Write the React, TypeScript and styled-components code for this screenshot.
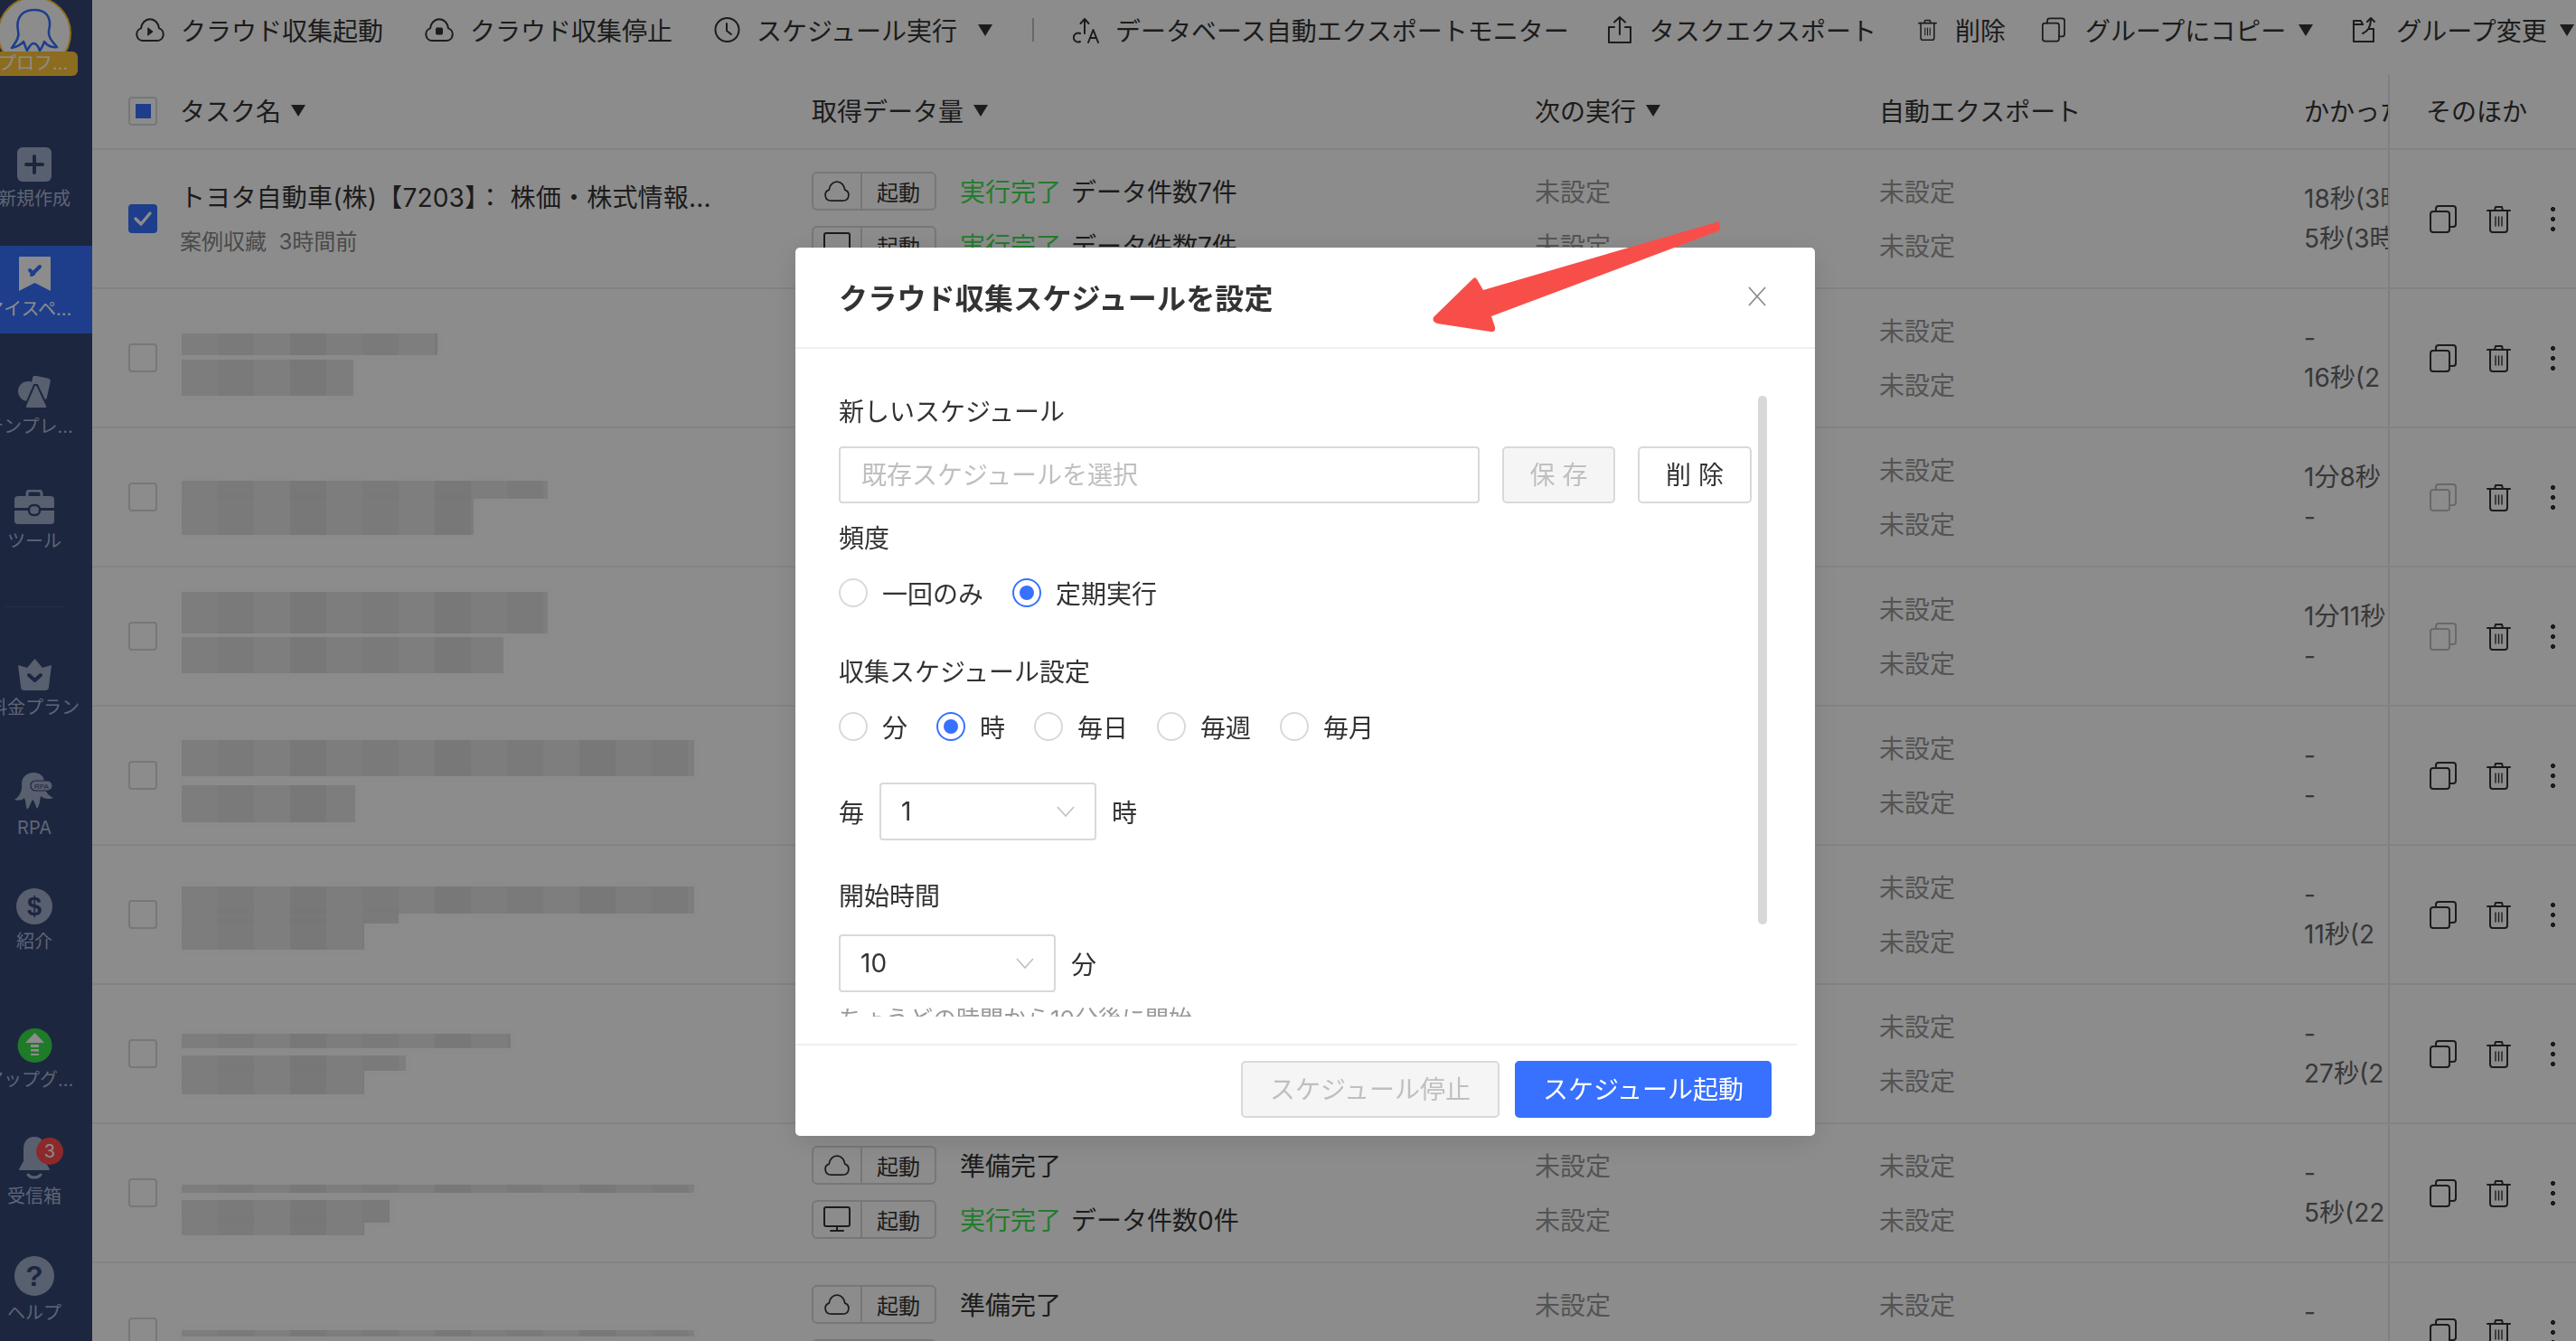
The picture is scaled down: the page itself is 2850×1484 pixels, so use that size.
import React from 'react';
import styled, { createGlobalStyle } from 'styled-components';

const GlobalStyle = createGlobalStyle`
	html, body {
		margin: 0;
		padding: 0;
		overflow: hidden;
		background: #fff;
	}
	* {
		box-sizing: border-box;
	}
	body {
		font-family: Inter, "Noto Sans CJK JP", "Noto Sans", sans-serif;
		color: #333;
	}
`;

const Page = styled.div`
	display: flex;
	width: 2850px;
	height: 1484px;
	overflow: hidden;
	background: #fff;
`;

/* sidebar: the screenshot is cut on the left, so it starts off screen */
const Sidebar = styled.nav`
	flex: none;
	width: 128px;
	margin-left: -26px;
	height: 100%;
	background: #354574;
	color: #a0afcc;
`;

const AvatarBlock = styled.div`
	position: relative;
	height: 84px;
	display: flex;
	justify-content: center;
	align-items: flex-start;
`;

const AvatarPicture = styled.svg`
	display: block;
	margin-top: -4px;
	width: 82px;
	height: 82px;
`;

const LevelBadge = styled.div`
	position: absolute;
	left: 16px;
	bottom: 0;
	width: 96px;
	height: 27px;
	padding: 0 8px;
	border-radius: 6px;
	background: #ffc53a;
	color: #fff;
	font-size: 20px;
	line-height: 27px;
	white-space: nowrap;
	overflow: hidden;
	text-overflow: ellipsis;
`;

const NavItem = styled.div<{ $mt: number; $active?: boolean }>`
	position: relative;
	height: 97px;
	margin-top: ${(p) => p.$mt}px;
	padding-top: 8px;
	background: ${(p) => (p.$active ? '#3871ff' : 'transparent')};
	color: ${(p) => (p.$active ? '#fff' : '#a0afcc')};
	display: flex;
	flex-direction: column;
	align-items: center;
`;

const NavIcon = styled.div`
	height: 43px;
	display: flex;
	align-items: flex-end;
	justify-content: center;
	svg {
		display: block;
	}
`;

const NavLabel = styled.div<{ $active?: boolean }>`
	width: 108px;
	margin-top: 5px;
	font-size: 20px;
	line-height: 28px;
	text-align: center;
	white-space: nowrap;
	overflow: hidden;
	text-overflow: ellipsis;
	color: ${(p) => (p.$active ? '#fff' : '#acb9d6')};
`;

const NavDivider = styled.div`
	width: 64px;
	height: 1px;
	margin: 45px 0 0 32px;
	background: #4a5a85;
`;

const Coin = styled.div<{ $size: number }>`
	width: ${(p) => p.$size}px;
	height: ${(p) => p.$size}px;
	border-radius: 50%;
	background: #a0afcc;
	color: #354574;
	font-size: ${(p) => p.$size * 0.72}px;
	font-weight: 700;
	line-height: ${(p) => p.$size}px;
	text-align: center;
	font-family: "Liberation Sans", sans-serif;
`;

const CountBadge = styled.div`
	position: absolute;
	left: 66px;
	top: 5px;
	width: 30px;
	height: 30px;
	border-radius: 50%;
	background: #ff4d4f;
	color: #fff;
	font-size: 20px;
	line-height: 30px;
	text-align: center;
`;

const Main = styled.main`
	flex: 1;
	min-width: 0;
	height: 100%;
	overflow: hidden;
`;

const Toolbar = styled.div`
	height: 82px;
	padding: 13px 0 0 48px;
	display: flex;
	align-items: flex-start;
	white-space: nowrap;
`;

const ToolItem = styled.div<{ $gap?: number; $ml?: number }>`
	height: 40px;
	margin-left: ${(p) => p.$ml ?? 46}px;
	display: flex;
	align-items: center;
	gap: ${(p) => p.$gap ?? 18}px;
	font-size: 28px;
	color: #333;
	svg {
		flex: none;
		display: block;
	}
`;

const ToolDivider = styled.div`
	width: 2px;
	height: 26px;
	margin: 7px 0 0 44px;
	background: #bdbdbd;
`;

const Caret = styled.i<{ $ml?: number }>`
	flex: none;
	display: inline-block;
	width: 0;
	height: 0;
	margin-left: ${(p) => p.$ml ?? 0}px;
	border-left: 8px solid transparent;
	border-right: 8px solid transparent;
	border-top: 13px solid #333;
`;

const columns = '97px 699px 800px 381px 470px 93px 208px';

const HeadRow = styled.div`
	height: 84px;
	display: grid;
	grid-template-columns: ${columns};
	border-bottom: 2px solid #eee;
`;

const HeadCell = styled.div<{ $fixed?: boolean }>`
	display: flex;
	align-items: center;
	gap: 11px;
	font-size: 28px;
	color: #333;
	white-space: nowrap;
	overflow: hidden;
	padding-bottom: 2px;
	padding-left: ${(p) => (p.$fixed ? '40px' : '0')};
	border-left: ${(p) => (p.$fixed ? '2px solid #e8e8e8' : 'none')};
`;

const CheckCell = styled.div`
	display: flex;
	align-items: center;
	padding-left: 40px;
`;

const CheckBox = styled.div<{ $state?: 'checked' | 'partial' }>`
	width: 32px;
	height: 32px;
	border-radius: 4px;
	border: 2px solid ${(p) => (p.$state === 'checked' ? '#3871ff' : '#d9d9d9')};
	background: ${(p) => (p.$state === 'checked' ? '#3871ff' : '#fff')};
	display: flex;
	align-items: center;
	justify-content: center;
	&::after {
		content: '';
		display: ${(p) => (p.$state === 'partial' ? 'block' : 'none')};
		width: 17px;
		height: 16px;
		background: #3871ff;
	}
`;

const Row = styled.div`
	height: 154px;
	display: grid;
	grid-template-columns: ${columns};
	border-bottom: 2px solid #eee;
`;

const NameCell = styled.div`
	padding-top: 33px;
	min-width: 0;
`;

const TaskName = styled.div`
	font-size: 28px;
	line-height: 40px;
	letter-spacing: 0.2px;
	color: #333;
	white-space: nowrap;
`;

const TaskMeta = styled.div`
	margin-top: 12px;
	font-size: 24px;
	line-height: 34px;
	color: #888;
`;

const BlurStack = styled.div<{ $top: number }>`
	padding: ${(p) => p.$top}px 0 0 2px;
	display: flex;
	flex-direction: column;
	align-items: flex-start;
`;

const BlurBar = styled.div<{ $w: number; $h: number; $gap: number }>`
	width: ${(p) => p.$w}px;
	height: ${(p) => p.$h}px;
	margin-top: ${(p) => p.$gap}px;
	background: repeating-linear-gradient(90deg, #e4e4e4 0 40px, #dedede 40px 80px, #e6e6e6 80px 120px, #dadada 120px 160px);
	box-shadow: 0 0 8px 4px rgba(0, 0, 0, 0.012);
`;

const LinesCell = styled.div`
	padding-top: 15px;
	min-width: 0;
`;

const Line = styled.div<{ $muted?: boolean }>`
	height: 60px;
	display: flex;
	align-items: center;
	font-size: 28px;
	white-space: nowrap;
	color: ${(p) => (p.$muted ? '#999' : '#333')};
`;

const RunTag = styled.div`
	flex: none;
	width: 138px;
	height: 43px;
	margin-right: 26px;
	border: 2px solid #d9d9d9;
	border-radius: 6px;
	display: flex;
	align-items: center;
	font-size: 24px;
	color: #333;
`;

const RunTagIcon = styled.div`
	width: 54px;
	height: 100%;
	border-right: 2px solid #d9d9d9;
	display: flex;
	align-items: center;
	justify-content: center;
`;

const RunTagText = styled.div`
	flex: 1;
	text-align: center;
`;

const DoneText = styled.span`
	color: #3ee250;
	margin-right: 11px;
`;

const TookCell = styled.div`
	overflow: hidden;
	display: flex;
	flex-direction: column;
	justify-content: center;
	font-size: 28px;
	line-height: 44px;
	color: #666;
	white-space: nowrap;
`;

const ActionCell = styled.div`
	border-left: 2px solid #e8e8e8;
	padding-left: 44px;
	display: flex;
	align-items: center;
	color: #333;
	svg {
		flex: none;
		display: block;
	}
`;

const CopyAction = styled.div<{ $faded?: boolean }>`
	opacity: ${(p) => (p.$faded ? 0.3 : 1)};
`;

const TrashAction = styled.div`
	margin-left: 33px;
`;

const MoreDots = styled.div`
	margin-left: 44px;
	width: 5px;
	height: 27px;
	background: radial-gradient(circle at 2.5px 2.5px, #333 2.3px, transparent 2.8px) 0 0 / 5px 11px repeat-y;
`;

const Mask = styled.div`
	position: fixed;
	inset: 0;
	background: rgba(0, 0, 0, 0.45);
`;

const Modal = styled.section`
	position: fixed;
	left: 880px;
	top: 274px;
	width: 1128px;
	height: 983px;
	border-radius: 5px;
	background: #fff;
	box-shadow: 0 6px 32px rgba(0, 0, 0, 0.12);
`;

const ModalHeader = styled.header`
	height: 112px;
	padding: 0 54px 2px 48px;
	border-bottom: 2px solid #f0f0f0;
	display: flex;
	align-items: center;
	justify-content: space-between;
`;

const ModalTitle = styled.h2`
	margin: 0;
	font-size: 32px;
	font-weight: 600;
	letter-spacing: 0.2px;
	color: #333;
`;

const ModalBody = styled.div`
	height: 739px;
	padding: 50px 0 0 48px;
	overflow: hidden;
`;

const ScrollThumb = styled.div`
	position: absolute;
	left: 1065px;
	top: 164px;
	width: 10px;
	height: 585px;
	border-radius: 5px;
	background: #d8d8d8;
`;

const FieldLabel = styled.div<{ $mt?: number }>`
	margin-top: ${(p) => p.$mt ?? 0}px;
	font-size: 28px;
	line-height: 40px;
	color: #333;
`;

const PresetRow = styled.div`
	margin-top: 18px;
	display: flex;
	gap: 25px;
`;

const PresetInput = styled.div`
	width: 709px;
	height: 63px;
	padding-left: 23px;
	border: 2px solid #d9d9d9;
	border-radius: 4px;
	font-size: 28px;
	line-height: 60px;
	color: #bfbfbf;
`;

const Btn = styled.div<{ $w: number; $kind?: 'disabled' | 'primary' }>`
	width: ${(p) => p.$w}px;
	height: 63px;
	border: 2px solid ${(p) => (p.$kind === 'primary' ? '#3871ff' : '#d9d9d9')};
	border-radius: 5px;
	font-size: 28px;
	line-height: 60px;
	text-align: center;
	background: ${(p) => (p.$kind === 'primary' ? '#3871ff' : p.$kind === 'disabled' ? '#f5f5f5' : '#fff')};
	color: ${(p) => (p.$kind === 'primary' ? '#fff' : p.$kind === 'disabled' ? '#bfbfbf' : '#333')};
`;

const RadioRow = styled.div<{ $mt: number }>`
	margin-top: ${(p) => p.$mt}px;
	display: flex;
	gap: 32px;
`;

const RadioItem = styled.label`
	display: flex;
	align-items: center;
	gap: 16px;
	height: 32px;
	font-size: 28px;
	color: #333;
`;

const RadioDot = styled.span<{ $on?: boolean }>`
	width: 32px;
	height: 32px;
	border-radius: 50%;
	border: 2px solid ${(p) => (p.$on ? '#3871ff' : '#d9d9d9')};
	display: flex;
	align-items: center;
	justify-content: center;
	&::after {
		content: '';
		display: ${(p) => (p.$on ? 'block' : 'none')};
		width: 16px;
		height: 16px;
		border-radius: 50%;
		background: #3871ff;
	}
`;

const InlineRow = styled.div<{ $mt: number }>`
	margin-top: ${(p) => p.$mt}px;
	display: flex;
	align-items: center;
	gap: 17px;
	font-size: 28px;
	color: #333;
`;

const SelectBox = styled.div`
	width: 240px;
	height: 64px;
	padding: 0 22px 0 22px;
	border: 2px solid #d9d9d9;
	border-radius: 4px;
	display: flex;
	align-items: center;
	justify-content: space-between;
	font-size: 28px;
	color: #333;
`;

const HintText = styled.div`
	margin-top: 10px;
	font-size: 26px;
	line-height: 40px;
	color: #999;
	white-space: nowrap;
`;

const ModalFooter = styled.footer`
	margin: 30px 20px 0 0;
	padding: 17px 28px 0 0;
	border-top: 2px solid #f0f0f0;
	display: flex;
	justify-content: flex-end;
	gap: 17px;
`;

const ArrowMark = styled.svg`
	position: fixed;
	left: 1570px;
	top: 230px;
	width: 350px;
	height: 150px;
`;

const iconProps = { fill: 'none', stroke: 'currentColor', strokeWidth: 2, strokeLinecap: 'round' as const, strokeLinejoin: 'round' as const };

const CloudShape = ({ w = 32, h = 26, children }: { w?: number; h?: number; children?: React.ReactNode }) => (
	<svg width={w} height={h} viewBox="0 0 32 26" {...iconProps}>
		<path d="M8 25 a7 7 0 0 1 -2 -13.6 C6.5 6 10.5 1.2 16 1.2 S25.5 6 26 11.4 A7 7 0 0 1 24 25 Z" />
		{children}
	</svg>
);

const CloudPlayIcon = () => (
	<CloudShape>
		<path d="M14 11 l5 4 -5 4 z" fill="currentColor" strokeWidth={1} />
	</CloudShape>
);

const CloudStopIcon = () => (
	<CloudShape>
		<rect x="12.5" y="11" width="7" height="7" rx="1" fill="currentColor" strokeWidth={1} />
	</CloudShape>
);

const ClockIcon = () => (
	<svg width="29" height="28" viewBox="0 0 29 28" {...iconProps}>
		<circle cx="14.5" cy="14" r="13" />
		<path d="M14 7 v8 l5 4" />
	</svg>
);

const DbExportIcon = () => (
	<svg width="30" height="30" viewBox="0 0 30 30" {...iconProps}>
		<path d="M13 19 V3 M8.5 8 L13 3 l4.5 5" />
		<path d="M8 19 a5 5 0 1 0 0 9" />
		<path d="M17 29 l5.500 -14 5.500 14 M19 24 h7" />
	</svg>
);

const UploadIcon = () => (
	<svg width="28" height="32" viewBox="0 0 28 32" {...iconProps}>
		<path d="M14 21 V2 M8 7.500 L14 2 l6 5.500" />
		<path d="M8 13 H2 V30 H26 V13 H20" />
	</svg>
);

const TrashIcon = ({ w = 27, h = 31 }: { w?: number; h?: number }) => (
	<svg width={w} height={h} viewBox="0 0 27 31" {...iconProps}>
		<path d="M1 6 H26 M9 6 l1 -4 h7 l1 4" />
		<path d="M4 6 V27 a3 3 0 0 0 3 3 H20 a3 3 0 0 0 3 -3 V6" />
		<path d="M10 13 V23 M13.500 13 V23 M17 13 V23" strokeWidth={1.4} />
	</svg>
);

const CopyIcon = ({ w = 30, h = 31 }: { w?: number; h?: number }) => (
	<svg width={w} height={h} viewBox="0 0 30 31" {...iconProps}>
		<rect x="1" y="7" width="21" height="23" rx="3" />
		<path d="M7 7 V4 a3 3 0 0 1 3 -3 H26 a3 3 0 0 1 3 3 V21 a3 3 0 0 1 -3 3 H22" />
	</svg>
);

const FolderMoveIcon = () => (
	<svg width="29" height="29" viewBox="0 0 29 29" {...iconProps}>
		<path d="M12 8 H2 V27 H24 V13 H19" />
		<path d="M2 8 V4 H10 l2 4" />
		<path d="M12 18 C17 16 21 11 21 2 M17 5 l4 -4 4 4" />
	</svg>
);

const MonitorIcon = () => (
	<svg width="30" height="28" viewBox="0 0 30 28" {...iconProps}>
		<rect x="1" y="1" width="28" height="21" rx="2" />
		<path d="M15 22 V27 M8 27 H22" />
	</svg>
);

const ChevronIcon = () => (
	<svg width="20" height="12" viewBox="0 0 20 12" fill="none" stroke="#bfbfbf" strokeWidth={1.6}>
		<path d="M1 1 L10 11 L19 1" />
	</svg>
);

const CheckMark = () => (
	<svg width="22" height="18" viewBox="0 0 22 18" fill="none" stroke="#fff" strokeWidth={3.4} strokeLinecap="round" strokeLinejoin="round">
		<path d="M3 9 L9 15 L19 3" />
	</svg>
);

const PlusSquare = () => (
	<svg width="38" height="38" viewBox="0 0 38 38">
		<rect width="38" height="38" rx="6" fill="#a0afcc" />
		<path d="M19 10 V28 M10 19 H28" stroke="#354574" strokeWidth={4} strokeLinecap="round" />
	</svg>
);

const BookmarkIcon = () => (
	<svg width="35" height="39" viewBox="0 0 35 39">
		<path d="M1 0 H34 a1 1 0 0 1 1 1 V38 L17.500 29 L0 38 V1 a1 1 0 0 1 1 -1 Z" fill="#fff" />
		<path d="M12 15 l4 4 M14 20 l9 -9" stroke="#3871ff" strokeWidth={4} strokeLinecap="round" fill="none" />
	</svg>
);

const TemplateIcon = () => (
	<svg width="37" height="37" viewBox="0 0 37 37" fill="currentColor">
		<circle cx="11" cy="17" r="11" />
		<rect x="14" y="1" width="20" height="24" rx="3" transform="rotate(12 24 13)" />
		<path d="M18 10 L8 33 a2 2 0 0 0 2 3 H30 a2 2 0 0 0 2 -3 L21 10 Z" stroke="#354574" strokeWidth={2} />
	</svg>
);

const BriefcaseIcon = () => (
	<svg width="44" height="38" viewBox="0 0 44 38" fill="currentColor">
		<path d="M14 8 V4 a3 3 0 0 1 3 -3 H27 a3 3 0 0 1 3 3 V8" fill="none" stroke="currentColor" strokeWidth={3} />
		<path d="M4 7 H40 a4 4 0 0 1 4 4 V20 H0 V11 a4 4 0 0 1 4 -4 Z" />
		<path d="M0 23 H44 V34 a4 4 0 0 1 -4 4 H4 a4 4 0 0 1 -4 -4 Z" />
		<rect x="16" y="17" width="12" height="11" rx="5" fill="currentColor" stroke="#354574" strokeWidth={2.5} />
	</svg>
);

const CrownIcon = () => (
	<svg width="39" height="35" viewBox="0 0 39 35">
		<path d="M19.500 0 L28 10 L38 7 L35 31 a4 4 0 0 1 -4 4 H8 a4 4 0 0 1 -4 -4 L1 7 L11 10 Z" fill="#a0afcc" />
		<path d="M13 18 l6.500 6 6.500 -6" fill="none" stroke="#354574" strokeWidth={4} strokeLinecap="round" strokeLinejoin="round" />
	</svg>
);

const RpaIcon = () => (
	<svg width="44" height="42" viewBox="0 0 44 42">
		<path
			d="M8 12 C8 4 15 0 21 0 C28 0 33 4 33 10 C33 18 35 24 43 28 C38 30 32 29 29 26 C28 31 28 36 25 40 C23 36 22 31 20 30 C18 33 17 38 14 41 C12 37 13 32 11 28 C8 31 4 31 0 30 C6 26 9 20 8 12 Z"
			fill="#a0afcc"
		/>
		<rect x="18" y="9" width="24" height="11" rx="5" fill="#a0afcc" stroke="#354574" strokeWidth={1.2} />
		<text x="30" y="17.500" textAnchor="middle" fontSize="8" fill="#354574" fontFamily="Liberation Sans, sans-serif">
			RPA
		</text>
	</svg>
);

const UpgradeIcon = () => (
	<svg width="39" height="38" viewBox="0 0 39 38">
		<circle cx="19.500" cy="19" r="19" fill="#38e04a" />
		<path d="M19.500 5 L30 16 H9 Z" fill="#fff" />
		<path d="M15 18 H24 V21 H15 Z M15 23 H24 V25.500 H15 Z M15 28 H24 V30 H15 Z" fill="#fff" />
	</svg>
);

const BellIcon = () => (
	<svg width="34" height="49" viewBox="0 0 34 49">
		<path d="M17 2 C8 2 5 9 5 16 V29 L0 38 a1 1 0 0 0 1 1 H33 a1 1 0 0 0 1 -1 L29 29 V16 C29 9 26 2 17 2 Z" fill="#a0afcc" />
		<path d="M10 44 C13 48 21 48 24 44" fill="none" stroke="#a0afcc" strokeWidth={3} strokeLinecap="round" />
	</svg>
);

const AvatarArt = () => (
	<AvatarPicture viewBox="-3 -4 82 82">
		<circle cx="38" cy="37" r="40" fill="#fff" stroke="#ffc53a" strokeWidth={2} />
		<path
			d="M20 34 C17 18 26 11 38 11 C50 11 58 18 54 34 C53 40 56 44 63 52 C57 53 52 50 49 46 C48 50 46 53 44 56 C42 50 40 48 37 48 C34 48 32 52 30 56 C28 52 27 48 26 46 C23 50 18 52 13 53 C17 47 22 42 20 34 Z"
			fill="none"
			stroke="#3871ff"
			strokeWidth={2.6}
			strokeLinejoin="round"
		/>
	</AvatarPicture>
);

type RunLine = { kind: 'cloud' | 'pc'; done?: string };

type TaskRow = {
	took: [string, string];
	bars?: { w: number; h: number; gap: number }[];
	top?: number;
	runs?: RunLine[];
	faded?: boolean;
};

const doneRuns: RunLine[] = [
	{ kind: 'cloud', done: 'データ件数7件' },
	{ kind: 'pc', done: 'データ件数7件' },
];

const idleRuns: RunLine[] = [{ kind: 'cloud' }, { kind: 'pc', done: 'データ件数0件' }];

// rows without runs sit behind the dialog, their run and next-run cells stay empty
// took column is cut by the fixed column, the strings stop where the picture stops
const taskRows: TaskRow[] = [
	{ took: ['18秒(3時', '5秒(3時'], runs: doneRuns },
	{ took: ['-', '16秒(2'], top: 49, bars: [{ w: 283, h: 24, gap: 0 }, { w: 190, h: 40, gap: 5 }] },
	{ took: ['1分8秒', '-'], faded: true, top: 58, bars: [{ w: 405, h: 20, gap: 0 }, { w: 323, h: 40, gap: 0 }] },
	{ took: ['1分11秒', '-'], faded: true, top: 27, bars: [{ w: 405, h: 46, gap: 0 }, { w: 356, h: 40, gap: 4 }] },
	{ took: ['-', '-'], top: 37, bars: [{ w: 567, h: 40, gap: 0 }, { w: 192, h: 41, gap: 10 }] },
	{ took: ['-', '11秒(2'], top: 45, bars: [{ w: 567, h: 30, gap: 0 }, { w: 240, h: 11, gap: 0 }, { w: 202, h: 29, gap: 0 }] },
	{ took: ['-', '27秒(2'], top: 54, bars: [{ w: 364, h: 16, gap: 0 }, { w: 248, h: 17, gap: 8 }, { w: 202, h: 26, gap: 0 }] },
	{ took: ['-', '5秒(22'], top: 67, runs: idleRuns, bars: [{ w: 567, h: 9, gap: 0 }, { w: 230, h: 25, gap: 8 }, { w: 202, h: 14, gap: 0 }] },
	{ took: ['-', '-'], top: 74, runs: idleRuns, bars: [{ w: 567, h: 7, gap: 0 }] },
];

const navItems = [
	{ label: '新規作成', mt: 66, icon: <PlusSquare /> },
	{ label: 'マイスペース', mt: 25, icon: <BookmarkIcon />, active: true },
	{ label: 'テンプレート', mt: 33, icon: <TemplateIcon /> },
	{ label: 'ツール', mt: 30, icon: <BriefcaseIcon /> },
];

const navItemsLower = [
	{ label: '料金プラン', mt: 41, icon: <CrownIcon /> },
	{ label: 'RPA', mt: 36, icon: <RpaIcon /> },
	{ label: '紹介', mt: 29, icon: <Coin $size={40}>$</Coin> },
	{ label: 'アップグレード', mt: 56, icon: <UpgradeIcon /> },
	{ label: '受信箱', mt: 32, icon: <BellIcon />, count: 3 },
	{ label: 'ヘルプ', mt: 32, icon: <Coin $size={44}>?</Coin> },
];

const renderNav = (item: { label: string; mt: number; icon: React.ReactNode; active?: boolean; count?: number }) => (
	<NavItem key={item.label} $mt={item.mt} $active={item.active}>
		<NavIcon>{item.icon}</NavIcon>
		{item.count ? <CountBadge>{item.count}</CountBadge> : null}
		<NavLabel $active={item.active}>{item.label}</NavLabel>
	</NavItem>
);

const Radio = ({ on, children }: { on?: boolean; children: React.ReactNode }) => (
	<RadioItem>
		<RadioDot $on={on} />
		{children}
	</RadioItem>
);

const App = () => {
	return (
		<Page>
			<GlobalStyle />
			<Sidebar>
				<AvatarBlock>
					<AvatarArt />
					<LevelBadge>プロフェッショナル</LevelBadge>
				</AvatarBlock>
				{navItems.map(renderNav)}
				<NavDivider />
				{navItemsLower.map(renderNav)}
			</Sidebar>
			<Main>
				<Toolbar>
					<ToolItem $ml={0}>
						<CloudPlayIcon />
						クラウド収集起動
					</ToolItem>
					<ToolItem>
						<CloudStopIcon />
						クラウド収集停止
					</ToolItem>
					<ToolItem>
						<ClockIcon />
						スケジュール実行
						<Caret $ml={5} />
					</ToolItem>
					<ToolDivider />
					<ToolItem $ml={43} $gap={17}>
						<DbExportIcon />
						データベース自動エクスポートモニター
					</ToolItem>
					<ToolItem $ml={42} $gap={19}>
						<UploadIcon />
						タスクエクスポート
					</ToolItem>
					<ToolItem $gap={20}>
						<TrashIcon w={21} h={26} />
						削除
					</ToolItem>
					<ToolItem $ml={40} $gap={22}>
						<CopyIcon w={26} h={28} />
						グループにコピー
						<Caret $ml={-8} />
					</ToolItem>
					<ToolItem $ml={43} $gap={20}>
						<FolderMoveIcon />
						グループ変更
						<Caret $ml={-6} />
					</ToolItem>
				</Toolbar>
				<HeadRow>
					<CheckCell>
						<CheckBox $state="partial" />
					</CheckCell>
					<HeadCell>
						タスク名
						<Caret />
					</HeadCell>
					<HeadCell>
						取得データ量
						<Caret />
					</HeadCell>
					<HeadCell>
						次の実行
						<Caret />
					</HeadCell>
					<HeadCell>自動エクスポート</HeadCell>
					<HeadCell>かかった時間</HeadCell>
					<HeadCell $fixed>そのほか</HeadCell>
				</HeadRow>
				{taskRows.map((row, i) => (
					<Row key={i}>
						<CheckCell>
							<CheckBox $state={i === 0 ? 'checked' : undefined}>{i === 0 ? <CheckMark /> : null}</CheckBox>
						</CheckCell>
						{row.bars ? (
							<BlurStack $top={row.top ?? 0}>
								{row.bars.map((bar, j) => (
									<BlurBar key={j} $w={bar.w} $h={bar.h} $gap={bar.gap} />
								))}
							</BlurStack>
						) : (
							<NameCell>
								<TaskName>トヨタ自動車(株)【7203】： 株価・株式情報...</TaskName>
								<TaskMeta>案例収藏&nbsp;&nbsp;3時間前</TaskMeta>
							</NameCell>
						)}
						<LinesCell>
							{row.runs?.map((run, j) => (
								<Line key={j}>
									<RunTag>
										<RunTagIcon>
											{run.kind === 'cloud' ? <CloudShape w={28} h={23} /> : <MonitorIcon />}
										</RunTagIcon>
										<RunTagText>起動</RunTagText>
									</RunTag>
									{run.done ? (
										<>
											<DoneText>実行完了</DoneText>
											{run.done}
										</>
									) : (
										'準備完了'
									)}
								</Line>
							))}
						</LinesCell>
						<LinesCell>
							{row.runs ? (
								<>
									<Line $muted>未設定</Line>
									<Line $muted>未設定</Line>
								</>
							) : null}
						</LinesCell>
						<LinesCell>
							<Line $muted>未設定</Line>
							<Line $muted>未設定</Line>
						</LinesCell>
						<TookCell>
							<div>{row.took[0]}</div>
							<div>{row.took[1]}</div>
						</TookCell>
						<ActionCell>
							<CopyAction $faded={row.faded}>
								<CopyIcon />
							</CopyAction>
							<TrashAction>
								<TrashIcon />
							</TrashAction>
							<MoreDots />
						</ActionCell>
					</Row>
				))}
			</Main>
			<Mask />
			<Modal>
				<ModalHeader>
					<ModalTitle>クラウド収集スケジュールを設定</ModalTitle>
					<svg width="20" height="22" viewBox="0 0 20 22" fill="none" stroke="#8c8c8c" strokeWidth={1.8}>
						<path d="M1 1 L19 21 M19 1 L1 21" />
					</svg>
				</ModalHeader>
				<ModalBody>
					<FieldLabel>新しいスケジュール</FieldLabel>
					<PresetRow>
						<PresetInput>既存スケジュールを選択</PresetInput>
						<Btn $w={125} $kind="disabled">
							保 存
						</Btn>
						<Btn $w={126}>削 除</Btn>
					</PresetRow>
					<FieldLabel $mt={19}>頻度</FieldLabel>
					<RadioRow $mt={24}>
						<Radio>一回のみ</Radio>
						<Radio on>定期実行</Radio>
					</RadioRow>
					<FieldLabel $mt={52}>収集スケジュール設定</FieldLabel>
					<RadioRow $mt={24}>
						<Radio>分</Radio>
						<Radio on>時</Radio>
						<Radio>毎日</Radio>
						<Radio>毎週</Radio>
						<Radio>毎月</Radio>
					</RadioRow>
					<InlineRow $mt={46}>
						毎
						<SelectBox>
							1
							<ChevronIcon />
						</SelectBox>
						時
					</InlineRow>
					<FieldLabel $mt={42}>開始時間</FieldLabel>
					<InlineRow $mt={22}>
						<SelectBox>
							10
							<ChevronIcon />
						</SelectBox>
						分
					</InlineRow>
					<HintText>ちょうどの時間から10分後に開始</HintText>
				</ModalBody>
				<ScrollThumb />
				<ModalFooter>
					<Btn $w={286} $kind="disabled">
						スケジュール停止
					</Btn>
					<Btn $w={284} $kind="primary">
						スケジュール起動
					</Btn>
				</ModalFooter>
			</Modal>
			<ArrowMark viewBox="1570 230 350 150">
				<path
					d="M1902 245 L1903 255 L1650 350 L1654 362 Q1655 368 1649 367 L1590 358 Q1584 356 1586 351 L1628 310 Q1632 305 1634 309 L1641 321 Z"
					fill="#f84e4a"
				/>
			</ArrowMark>
		</Page>
	);
};

export default App;
